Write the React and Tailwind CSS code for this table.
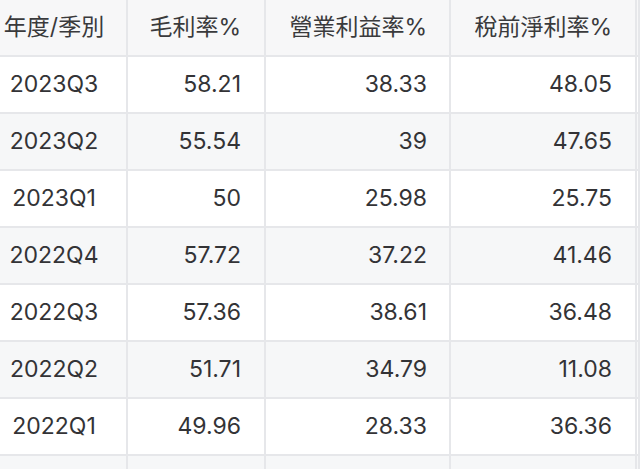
import React from "react";

const rows = [
  ["2023Q3", "58.21", "38.33", "48.05"],
  ["2023Q2", "55.54", "39", "47.65"],
  ["2023Q1", "50", "25.98", "25.75"],
  ["2022Q4", "57.72", "37.22", "41.46"],
  ["2022Q3", "57.36", "38.61", "36.48"],
  ["2022Q2", "51.71", "34.79", "11.08"],
  ["2022Q1", "49.96", "28.33", "36.36"],
  ["", "", "", ""],
];

const font = { fontFamily: '"Inter", "Noto Sans CJK TC", sans-serif' };

function Row({ cells, bg, header }) {
  const base = `h-[57px] border-b-2 border-[#e6e7ea] flex items-center border-r-2 ${header ? "text-[#3a3a3c]" : "text-[#333336]"}`;
  return (
    <div className={`flex ${bg}`}>
      <div className={`${base} w-[128px] shrink-0 justify-center pr-[18px]`}>{cells[0]}</div>
      <div className={`${base} w-[138px] shrink-0 justify-end pr-[23px]`}>{cells[1]}</div>
      <div className={`${base} w-[185px] shrink-0 justify-end pr-[22px]`}>{cells[2]}</div>
      <div className={`${base} w-[186px] shrink-0 justify-end pr-[23px]`}>{cells[3]}</div>
      <div className={`${base} flex-1 border-r-0`}></div>
    </div>
  );
}

export default function App() {
  return (
    <div className="w-[640px] h-[469px] overflow-hidden bg-white text-[23px]" style={font}>
      <Row header bg="bg-[#f7f7f8]" cells={["年度/季別", "毛利率%", "營業利益率%", "稅前淨利率%"]} />
      {rows.map((r, i) => (
        <Row key={i} cells={r} bg={i % 2 === 1 ? "bg-[#f6f7f8]" : "bg-white"} />
      ))}
    </div>
  );
}
